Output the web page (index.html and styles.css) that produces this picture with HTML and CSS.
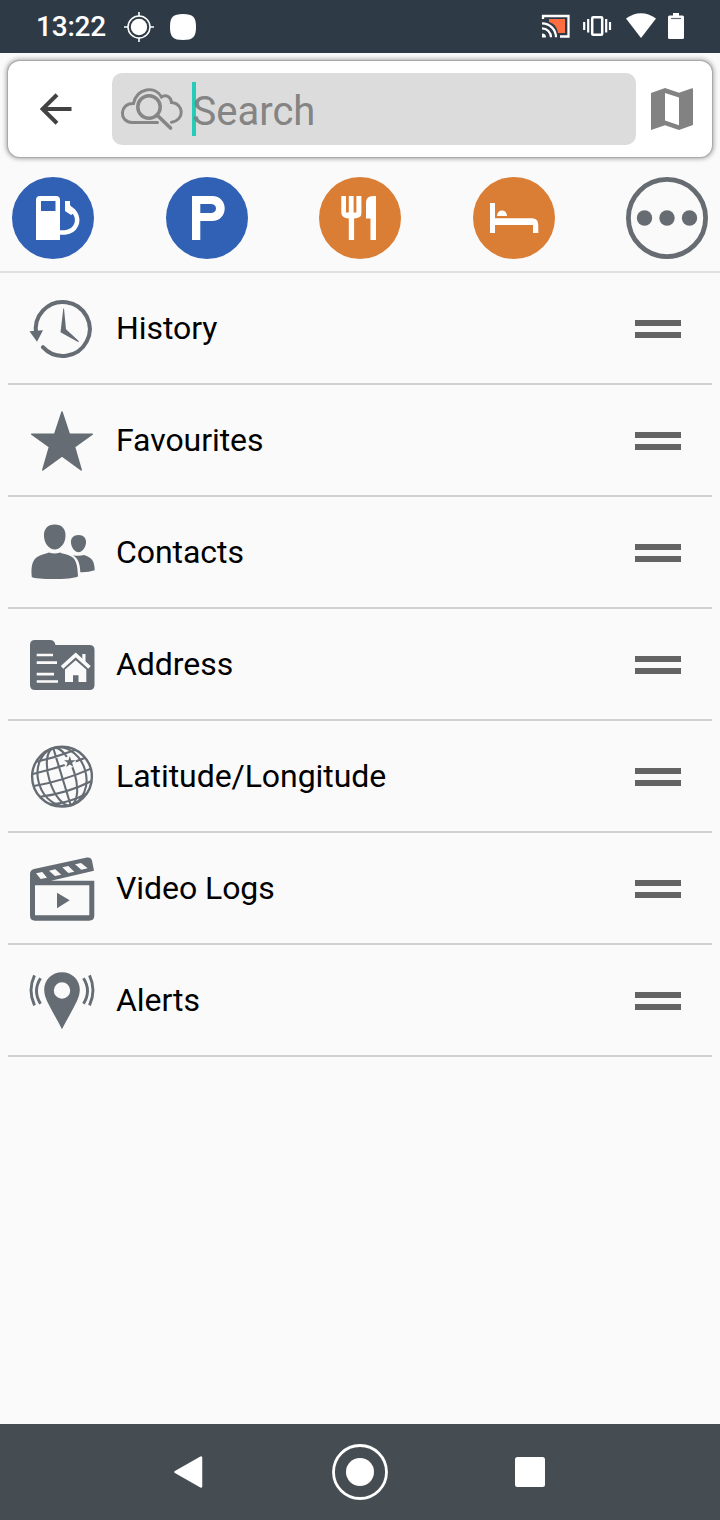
FILE: index.html
```html
<!DOCTYPE html>
<html lang="en">
<head>
<meta charset="utf-8">
<title>Search</title>
<link rel="stylesheet" href="styles.css">
</head>
<body>
<div class="screen">
  <header class="status">
    <div class="status-left">
      <span class="clock">13:22</span>
      <svg class="gps" width="30" height="30" viewBox="0 0 30 30"><circle cx="15" cy="15" r="8.2" fill="#fff"/><circle cx="15" cy="15" r="11" fill="none" stroke="#fff" stroke-width="1.5"/><path d="M15 0v4M15 26v4M0 15h4M26 15h4" stroke="#fff" stroke-width="1.6"/></svg>
      <svg width="26" height="26" viewBox="0 0 26 26"><path d="M13 0C23 0 26 3 26 13S23 26 13 26 0 23 0 13 3 0 13 0Z" fill="#fff"/></svg>
    </div>
    <svg width="144" height="28" viewBox="541 13 144 28">
      <path d="M549 19h16v14h-7C557 27 554 23.500 549 22Z" fill="#ff6e40"/>
      <path d="M543 19v-3h25.500v20.500H560" fill="none" stroke="#fff" stroke-width="2.300"/>
      <path d="M542 23.300a14 14 0 0 1 14 14M542 28.300a9 9 0 0 1 9 9" fill="none" stroke="#fff" stroke-width="2.200"/><path d="M542 33.500a4 4 0 0 1 4 4h-4Z" fill="#fff"/>
      <rect x="592.200" y="17.200" width="10" height="17.600" rx="1" fill="none" stroke="#fff" stroke-width="2.500"/>
      <path d="M588.200 19v13.500M606.200 19v13.500M584.200 22v8M610 22v8" stroke="#fff" stroke-width="2.200"/>
      <path d="M626 18.500Q641 8 656 18.500L641 38Z" fill="#fff"/>
      <path d="M673 13h6v2.500h3.500q1.500 0 1.500 1.500v20.500q0 1.500-1.500 1.500h-13q-1.500 0-1.500-1.500V17q0-1.500 1.500-1.500h3.500Z" fill="#fff"/><path d="M671 18.500h10" stroke="#5f6b74" stroke-width="1.200"/>
    </svg>
  </header>

  <div class="search-wrap">
    <div class="search-card">
      <svg class="back" width="32" height="32" viewBox="0 0 32 32"><path d="M31.500 16H2.500M17 1.800L2.500 16 17 30.200" fill="none" stroke="#424242" stroke-width="4"/></svg>
      <div class="field">
        <svg class="cloud" width="64" height="44" viewBox="120 86 64 44" fill="none" stroke="#868686" stroke-width="3" stroke-linecap="round">
          <path d="M157.500 121.500H132C118.500 121 119.500 102 133.500 102.500C137 86.500 155 84.500 161.500 96C166 93 171 96 171.500 101.500C184 102.500 185 119 171.500 121.300"/>
          <circle cx="149" cy="106" r="11.200" stroke-width="3.500"/><path d="M157 114L170.500 127" stroke-width="3.700"/>
        </svg>
        <i class="caret"></i><span class="placeholder">Search</span>
      </div>
      <svg class="map" width="42" height="42" viewBox="0 0 42 42"><path fill="#828282" fill-rule="evenodd" d="M0 5L14 0 28 4.800 41 .200Q42 0 42 1V37L28 42 14 37.200 0 42ZM14 5V32.500L28 37.300V9.500Z"/></svg>
    </div>
  </div>

  <nav class="quick">
    <span class="disc blue"><svg viewBox="12 177 82 82"><path fill="#fff" fill-rule="evenodd" d="M36 200q0-4 4-4h16q4 0 4 4v40H36ZM41 201v10h14.500v-10Z"/><path d="M60 232.500h5C76 231 80 221 75 213Q72 208.500 67 208" fill="none" stroke="#fff" stroke-width="4.500"/><path d="M65 201h5v4l6 7-5 3-6-4Z" fill="#fff"/></svg></span>
    <span class="disc blue"><svg viewBox="166 177 82 82"><path fill="#fff" fill-rule="evenodd" d="M192 196h20c17 0 17 25 0 25h-11.700v19H192ZM200.300 204v9h11.200c6 0 6-9 0-9Z"/></svg></span>
    <span class="disc orange"><svg viewBox="319 177 82 82"><path fill="#fff" d="M341.300 196h4.700v16.500h2.800V196h4.800v16.500h2.800V196h5v17.500q0 4.500-7.300 5V240h-5.300v-21.500q-7.500-.5-7.500-6ZM366 218.500V203q0-7 7-7h3v44h-5.500v-21.500Z"/></svg></span>
    <span class="disc orange"><svg viewBox="473 177 82 82"><path fill="#fff" d="M490 203h5v15.200h37q6.300 0 6.300 7V233H533v-8h-38v8h-5ZM497 216q.5-5.500 5-5.500t5 5.500Z"/></svg></span>
    <span class="disc"><svg viewBox="0 0 82 82"><circle cx="41" cy="41" r="38.600" fill="none" stroke="#666c72" stroke-width="4.800"/><g fill="#666c72"><circle cx="18.500" cy="41" r="7.700"/><circle cx="41" cy="41" r="7.700"/><circle cx="63.500" cy="41" r="7.700"/></g></svg></span>
  </nav>

  <ul class="list">
    <li class="row">
      <svg class="icon" viewBox="26 0 72 110"><path d="M42.300 72.500A27 27 0 1 0 35.800 60" fill="none" stroke="#656c73" stroke-width="4" stroke-linecap="round" transform="translate(0.600 1.700)"/><path d="M29.500 58.300L43 57.300 37 68.700ZM63.300 35.500L64 35.500 66 56.300 79 68.300 78 69 60.500 59.300Z"/></svg>
      <span class="label">History</span><i class="handle"></i>
    </li>
    <li class="row">
      <svg class="icon" viewBox="26 0 72 110"><path stroke="#656c73" stroke-width="1.500" stroke-linejoin="round" d="M62 27L69.300 49.200H92.300L74.500 61.800 81.200 85 62 71 42.800 85 49.500 61.800 31.700 49.200H54.700Z"/></svg>
      <span class="label">Favourites</span><i class="handle"></i>
    </li>
    <li class="row">
      <svg class="icon" viewBox="26 0 72 110"><path d="M54.700 27.500C62 27.500 66 32 65.500 39.500C65 47 60 52.500 54.700 52.500S44.500 47 44 39.500C43.500 32 47.500 27.500 54.700 27.500ZM31.800 80C30.500 67 33 60.500 42 57.800C45.500 56.700 47 56 49 55.500Q54.700 57.500 60 55.500C62 56.500 65 57 68 58C76.500 60.500 77.500 68 78 79.500C73 82.800 36 82.800 31.800 80ZM78.500 38C83.500 38 86.500 41 86 46C85.500 51 82 55.200 78.500 55.200S71.500 51 71 46C70.500 41 73.500 38 78.500 38ZM73 58.300Q79 59.500 84 58C92 60.500 94.500 64 94.700 73.300Q88 75.500 80.300 75.200C80 67 78.500 62 73 58.300Z"/></svg>
      <span class="label">Contacts</span><i class="handle"></i>
    </li>
    <li class="row">
      <svg class="icon" viewBox="26 0 72 110"><path d="M30 36Q30 31 35 31H50Q54.500 31 55.500 36H89.500Q94.500 36 94.500 41V76Q94.500 81 89.500 81H35Q30 81 30 76Z"/><path d="M36.700 46H53M36.700 53.700H57M36.700 65.200H54M36.700 72.500H58" stroke="#fafafa" stroke-width="2.700"/><path d="M62 58.300L75.700 46 89.500 58.300" fill="none" stroke="#fafafa" stroke-width="3.600"/><path fill="#fafafa" d="M82.300 45H85.500V54L82.300 51ZM75.700 51.300L86.300 60.500V73H78.500V66.300H73V73H65V60.500Z"/></svg>
      <span class="label">Address</span><i class="handle"></i>
    </li>
    <li class="row">
      <svg class="icon" viewBox="26 0 72 110"><g fill="none" stroke="#656c73" stroke-width="2.100"><circle cx="62" cy="55.700" r="29.900" stroke-width="2.400"/><g transform="rotate(-17 62 55.700)"><path d="M62 26V85.500M34 44.500Q62 46.500 90 44.500M32.500 56.500Q62 60 91.500 56.500M35.500 68.500Q62 73 88.500 68.500M43 79Q62 83 81 79M41 34Q62 35.500 83 34"/><ellipse cx="62" cy="55.700" rx="13" ry="29.800"/><ellipse cx="62" cy="55.700" rx="24" ry="29.800"/></g></g><circle cx="69.800" cy="41" r="6" fill="#fafafa"/><path d="M69.800 35L71.200 39.200H75.600L72.100 41.800 73.400 46 69.800 43.400 66.200 46 67.500 41.800 64 39.200H68.400Z"/></svg>
      <span class="label">Latitude/Longitude</span><i class="handle"></i>
    </li>
    <li class="row">
      <svg class="icon" viewBox="26 0 72 110"><path fill-rule="evenodd" d="M30 82.500V41Q30 37 34 36L87 24.500Q91 24 92 27.500L94 37.700 51 47.700H94.300V82.500Q94.300 87.700 89 87.700H35Q30 87.700 30 82.500ZM35 52.300V82.300H89.300V52.300Z"/><path fill="#fafafa" d="M36 40.300L42.300 39 47 44.700 40.700 46ZM49 37.700L55.300 36.300 61.300 41.700 55 43ZM62.300 34.300L68.300 33 74.300 38.700 68.300 40ZM75 31.300L81 30 87.700 35.300 81.300 36.700Z"/><path d="M57 59.700L69.700 67.300 57 75.300Z"/></svg>
      <span class="label">Video Logs</span><i class="handle"></i>
    </li>
    <li class="row">
      <svg class="icon" viewBox="26 0 72 110"><path fill-rule="evenodd" d="M62 27.300C72 27.300 79.800 35 79.800 44.500C79.800 54 74 61 62 84.300C50 61 44.200 54 44.200 44.500C44.200 35 52 27.300 62 27.300ZM62 37.300A8.200 8.200 0 1 0 62 53.700A8.200 8.200 0 1 0 62 37.300Z"/><path fill="none" stroke="#656c73" stroke-width="2.900" d="M40.500 33.300Q32.500 46 40.500 58.700M34.500 30.300Q27.500 45 34.500 60.300M83.500 33.300Q91.500 46 83.500 58.700M89.500 30.300Q96.500 45 89.500 60.300"/></svg>
      <span class="label">Alerts</span><i class="handle"></i>
    </li>
  </ul>

  <footer class="navbar">
    <svg width="372" height="60" viewBox="174 1442 372 60" fill="#fff"><path d="M175.500 1472L201 1457.500V1486.500Z" stroke="#fff" stroke-width="2.500" stroke-linejoin="round"/><circle cx="360" cy="1472" r="14"/><circle cx="360" cy="1472" r="26.500" fill="none" stroke="#fff" stroke-width="2.800"/><rect x="515" y="1457" width="30" height="30" rx="2.500"/></svg>
  </footer>
</div>
</body>
</html>
```
FILE: styles.css
```css
* { box-sizing: border-box; }
body { margin: 0; background: #fafafa; font-family: Roboto, "Liberation Sans", sans-serif; }
svg { display: block; flex: none; }
.screen { width: 720px; height: 1520px; display: flex; flex-direction: column; overflow: hidden; }
.status { height: 53px; flex: none; background: #2e3b47; color: #fff; display: flex; justify-content: space-between; align-items: center; padding: 0 35px 0 36px; }
.status-left { display: flex; align-items: center; }
.clock { width: 88px; padding-top: 1px; font-size: 28px; font-weight: 500; letter-spacing: -0.2px; line-height: 54px; }
.gps { margin-right: 16px; }
.search-wrap { height: 112px; flex: none; padding: 8px 8px 0; }
.search-card { height: 96px; background: #fff; border-radius: 12px; box-shadow: 0 0 0 1px #aaa, 0 0 4px 1.5px #aaa; display: flex; align-items: center; padding: 0 19px 0 32px; }
.back { margin-right: 40px; }
.field { width: 524px; height: 72px; background: #dcdcdc; border-radius: 10px; display: flex; align-items: center; padding-left: 8px; }
.caret { width: 4px; height: 54px; background: #26ccb8; margin-left: 8px; }
.placeholder { color: #848484; font-size: 40px; line-height: 48px; margin: 6px 0 0 -3.500px; }
.map { margin-left: 15px; }
.quick { height: 108px; flex: none; padding: 12px 12px 0; display: flex; justify-content: space-between; border-bottom: 2px solid #e0e0e0; }
.disc { width: 82px; height: 82px; border-radius: 50%; }
.disc svg { width: 82px; height: 82px; }
.blue { background: #3161b4; }
.orange { background: #da7d35; }
.list { list-style: none; margin: 0; padding: 0 8px; flex: 1; }
.row { height: 112px; border-bottom: 2px solid #d1d1d1; display: flex; align-items: center; padding: 0 31px 0 18px; }
.icon { width: 72px; height: 110px; fill: #656c73; }
.label { flex: 1; margin-left: 18px; color: #000; font-size: 32px; line-height: 40px; letter-spacing: -0.06px; }
.handle { width: 46px; height: 18px; margin-top: 2px; border-top: 6px solid #636363; border-bottom: 6px solid #636363; }
.navbar { height: 96px; flex: none; background: #454d53; display: flex; justify-content: center; align-items: center; }
```
